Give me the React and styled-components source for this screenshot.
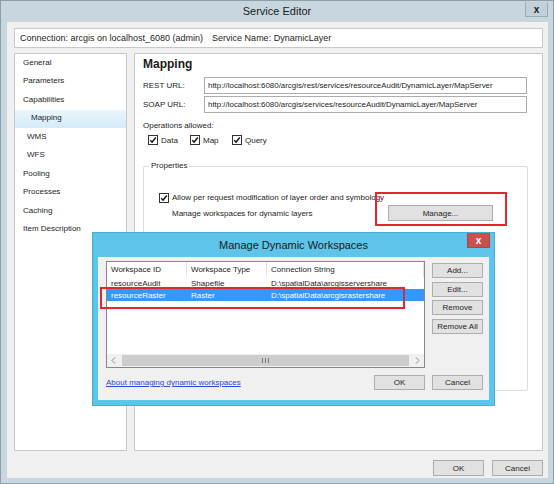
import React from "react"
import styled, { createGlobalStyle } from "styled-components"

const GlobalStyle = createGlobalStyle`
  html, body {
    margin: 0;
    padding: 0;
  }
  body {
    width: 554px;
    height: 484px;
    overflow: hidden;
    background: #c8d6e0;
    font-family: "Liberation Sans", Arial, sans-serif;
    font-size: 8px;
    color: #1e1e1e;
  }
`

const Window = styled.div`
  position: relative;
  width: 554px;
  height: 484px;
  box-sizing: border-box;
  background: #c8d6e0;
  box-shadow: inset 0 0 0 1px #8d9eab;
  display: flex;
  flex-direction: column;
`

const TitleBar = styled.div`
  height: 22px;
  display: flex;
  align-items: center;
  justify-content: center;
  font-size: 11px;
  color: #1a1a1a;
  flex: none;
`

const CloseButton = styled.div`
  position: absolute;
  top: ${(p) => p.$top}px;
  right: ${(p) => p.$right}px;
  width: ${(p) => p.$w}px;
  height: 15px;
  box-sizing: border-box;
  display: flex;
  align-items: center;
  justify-content: center;
  background: ${(p) => (p.$red ? "#c75050" : "#c3d0da")};
  border: 1px solid ${(p) => (p.$red ? "#b04545" : "#9aabb8")};
  border-top: none;
  font-size: 10px;
  font-weight: bold;
  color: ${(p) => (p.$red ? "#ffffff" : "#1a1a1a")};
`

const Body = styled.div`
  flex: 1;
  margin: 0 6px 6px 7px;
  background: #f0f0f0;
  padding: 6px 5px 0 7px;
  display: flex;
  flex-direction: column;
`

const ConnectionBar = styled.div`
  height: 20px;
  box-sizing: border-box;
  border: 1px solid #c8c8c8;
  background: #ffffff;
  display: flex;
  align-items: center;
  padding-left: 5px;
  font-size: 9px;
  gap: 9px;
`

const Columns = styled.div`
  margin-top: 5px;
  height: 398px;
  display: flex;
  gap: 7px;
`

const Nav = styled.div`
  width: 113px;
  box-sizing: border-box;
  background: #ffffff;
  border: 1px solid #c8c8c8;
  display: flex;
  flex-direction: column;
`

const NavItem = styled.div`
  height: 18.5px;
  display: flex;
  align-items: center;
  padding-left: ${(p) => p.$indent}px;
  padding-bottom: 2px;
  box-sizing: border-box;
  background: ${(p) =>
    p.$selected ? "linear-gradient(#eaf5fc, #d5ebf9)" : "transparent"};
`

const Main = styled.div`
  flex: 1;
  box-sizing: border-box;
  background: #ffffff;
  border: 1px solid #c8c8c8;
  padding: 2px 13px 0 8px;
  display: flex;
  flex-direction: column;
`

const Heading = styled.div`
  height: 16px;
  display: flex;
  align-items: center;
  font-size: 12px;
  font-weight: bold;
  color: #1a1a1a;
`

const FieldRow = styled.div`
  display: flex;
  align-items: center;
  margin-top: ${(p) => p.$mt}px;
`

const FieldLabel = styled.div`
  width: 61px;
  flex: none;
`

const TextInput = styled.div`
  width: 323px;
  height: 17px;
  box-sizing: border-box;
  border: 1px solid #abadb3;
  background: #ffffff;
  display: flex;
  align-items: center;
  padding-left: 3px;
  font-size: 7.9px;
  white-space: nowrap;
  overflow: hidden;
`

const Caption = styled.div`
  margin-top: ${(p) => p.$mt}px;
  height: 12px;
  display: flex;
  align-items: center;
`

const ChecksRow = styled.div`
  margin-top: 3px;
  height: 12px;
  padding-left: 5px;
  display: flex;
  align-items: center;
`

const CheckItem = styled.label`
  width: ${(p) => p.$w || 42}px;
  display: flex;
  align-items: center;
  gap: 3px;
  flex: none;
`

const Box = styled.span`
  width: 10px;
  height: 10px;
  box-sizing: border-box;
  border: 1px solid #333333;
  background: #ffffff;
  display: inline-flex;
  align-items: center;
  justify-content: center;
  flex: none;
`

const GroupBox = styled.div`
  position: relative;
  margin-top: 20px;
  width: 385px;
  height: 225px;
  box-sizing: border-box;
  border: 1px solid #dcdcdc;
  border-radius: 2px;
  padding: 23px 0 0 15px;
`

const GroupLegend = styled.span`
  position: absolute;
  top: -6px;
  left: 5px;
  padding: 0 2px;
  background: #ffffff;
`

const GroupRow = styled.div`
  display: flex;
  align-items: center;
  height: ${(p) => p.$h}px;
  padding-left: ${(p) => p.$pl || 0}px;
`

const RowText = styled.div`
  width: 216px;
  flex: none;
`

const Button = styled.div`
  width: ${(p) => p.$w || 51}px;
  height: ${(p) => p.$h || 15}px;
  box-sizing: border-box;
  background: #e1e1e1;
  border: 1px solid #adadad;
  display: flex;
  align-items: center;
  justify-content: center;
  flex: none;
`

const Footer = styled.div`
  margin-top: 9px;
  display: flex;
  justify-content: flex-end;
  gap: 8px;
`

const Dialog = styled.div`
  position: absolute;
  left: 93px;
  top: 233px;
  width: 401px;
  height: 172px;
  box-sizing: border-box;
  background: #5ec4ea;
  box-shadow: 0 0 0 1px #48aed6;
  display: flex;
  flex-direction: column;
`

const DialogTitle = styled.div`
  height: 24px;
  flex: none;
  display: flex;
  align-items: center;
  justify-content: center;
  font-size: 11px;
  color: #1a1a1a;
  padding-bottom: 1px;
  box-sizing: border-box;
`

const DialogBody = styled.div`
  flex: 1;
  margin: 0 5px 5px 5px;
  background: #f0f0f0;
  padding: 4px 6px 10px 8px;
  display: grid;
  grid-template-columns: 319px 51px;
  grid-template-rows: 107px 15px;
  column-gap: 7px;
  row-gap: 7px;
`

const List = styled.div`
  box-sizing: border-box;
  background: #ffffff;
  border: 1px solid #828790;
  display: flex;
  flex-direction: column;
  overflow: hidden;
`

const ListRow = styled.div`
  display: grid;
  grid-template-columns: 80px 80px 1fr;
  height: ${(p) => p.$h}px;
  align-items: center;
  background: ${(p) => (p.$selected ? "#3399ff" : "transparent")};
  color: ${(p) => (p.$selected ? "#ffffff" : "#1e1e1e")};
`

const Cell = styled.div`
  height: 100%;
  display: flex;
  align-items: center;
  padding-left: 4px;
  white-space: nowrap;
  overflow: hidden;
  border-right: ${(p) => (p.$header ? "1px solid #e5e5e5" : "none")};
`

const ListFill = styled.div`
  flex: 1;
`

const ScrollBar = styled.div`
  height: 13px;
  flex: none;
  background: #f0f0f0;
  display: flex;
  align-items: stretch;
`

const ScrollArrow = styled.div`
  width: 13px;
  display: flex;
  align-items: center;
  justify-content: center;
  flex: none;
`

const ScrollThumb = styled.div`
  flex: 1;
  margin: 1px 2px;
  background: #cdcdcd;
  display: flex;
  align-items: center;
  justify-content: center;
`

const SideButtons = styled.div`
  display: flex;
  flex-direction: column;
  gap: 3.5px;
  padding-top: 2px;
`

const BottomRow = styled.div`
  display: flex;
  align-items: center;
  justify-content: space-between;
`

const HelpLink = styled.a`
  color: #2a48d0;
  text-decoration: underline;
  cursor: pointer;
`

const Marker = styled.div`
  position: absolute;
  left: ${(p) => p.$x}px;
  top: ${(p) => p.$y}px;
  width: ${(p) => p.$w}px;
  height: ${(p) => p.$h}px;
  box-sizing: border-box;
  border: 2px solid #e2282f;
  pointer-events: none;
`

const Check = () => (
  <Box>
    <svg width="8" height="8" viewBox="0 0 8 8">
      <path d="M1.2 4.2 L3.1 6.1 L6.8 1.6" stroke="#1e1e1e" strokeWidth="1.5" fill="none" />
    </svg>
  </Box>
)

const navItems = [
  { label: "General", indent: 8 },
  { label: "Parameters", indent: 8 },
  { label: "Capabilities", indent: 8 },
  { label: "Mapping", indent: 16, selected: true },
  { label: "WMS", indent: 12 },
  { label: "WFS", indent: 12 },
  { label: "Pooling", indent: 8 },
  { label: "Processes", indent: 8 },
  { label: "Caching", indent: 8 },
  { label: "Item Description", indent: 8 },
]

const workspaces = [
  ["resourceAudit", "Shapefile", "D:\\spatialData\\arcgisservershare"],
  ["resourceRaster", "Raster", "D:\\spatialData\\arcgisrastershare", true],
]

const App = () => {
  return (
    <>
      <GlobalStyle />
      <Window>
        <TitleBar>Service Editor</TitleBar>
        <CloseButton $top={2} $right={6} $w={23}>x</CloseButton>
        <Body>
          <ConnectionBar>
            <span>Connection: arcgis on localhost_6080 (admin)</span>
            <span>Service Name: DynamicLayer</span>
          </ConnectionBar>
          <Columns>
            <Nav>
              {navItems.map((item) => (
                <NavItem key={item.label} $indent={item.indent} $selected={item.selected}>
                  {item.label}
                </NavItem>
              ))}
            </Nav>
            <Main>
              <Heading>Mapping</Heading>
              <FieldRow $mt={5}>
                <FieldLabel>REST URL:</FieldLabel>
                <TextInput>http://localhost:6080/arcgis/rest/services/resourceAudit/DynamicLayer/MapServer</TextInput>
              </FieldRow>
              <FieldRow $mt={2}>
                <FieldLabel>SOAP URL:</FieldLabel>
                <TextInput>http://localhost:6080/arcgis/services/resourceAudit/DynamicLayer/MapServer</TextInput>
              </FieldRow>
              <Caption $mt={6}>Operations allowed:</Caption>
              <ChecksRow>
                <CheckItem><Check />Data</CheckItem>
                <CheckItem><Check />Map</CheckItem>
                <CheckItem><Check />Query</CheckItem>
              </ChecksRow>
              <GroupBox>
                <GroupLegend>Properties</GroupLegend>
                <GroupRow $h={15}>
                  <CheckItem $w={300}>
                    <Check />
                    Allow per request modification of layer order and symbology
                  </CheckItem>
                </GroupRow>
                <GroupRow $h={16} $pl={13}>
                  <RowText>Manage workspaces for dynamic layers</RowText>
                  <Button $w={105} $h={16}>Manage...</Button>
                </GroupRow>
              </GroupBox>
            </Main>
          </Columns>
          <Footer>
            <Button $h={16}>OK</Button>
            <Button $h={16}>Cancel</Button>
          </Footer>
        </Body>

        <Marker $x={375} $y={192} $w={132} $h={34} />

        <Dialog>
          <DialogTitle>Manage Dynamic Workspaces</DialogTitle>
          <CloseButton $top={0} $right={4} $w={23} $red>x</CloseButton>
          <DialogBody>
            <List>
              <ListRow $h={15}>
                <Cell $header>Workspace ID</Cell>
                <Cell $header>Workspace Type</Cell>
                <Cell $header>Connection String</Cell>
              </ListRow>
              {workspaces.map(([id, type, conn, selected]) => (
                <ListRow key={id} $h={12} $selected={selected}>
                  <Cell>{id}</Cell>
                  <Cell>{type}</Cell>
                  <Cell>{conn}</Cell>
                </ListRow>
              ))}
              <ListFill />
              <ScrollBar>
                <ScrollArrow>
                  <svg width="5" height="7" viewBox="0 0 5 7">
                    <path d="M4 0.5 L1 3.5 L4 6.5" stroke="#8a8a8a" strokeWidth="1" fill="none" />
                  </svg>
                </ScrollArrow>
                <ScrollThumb>
                  <svg width="7" height="5" viewBox="0 0 7 5">
                    <path d="M0.5 0 V5 M3.5 0 V5 M6.5 0 V5" stroke="#7a7a7a" strokeWidth="1" />
                  </svg>
                </ScrollThumb>
                <ScrollArrow>
                  <svg width="5" height="7" viewBox="0 0 5 7">
                    <path d="M1 0.5 L4 3.5 L1 6.5" stroke="#8a8a8a" strokeWidth="1" fill="none" />
                  </svg>
                </ScrollArrow>
              </ScrollBar>
            </List>
            <SideButtons>
              <Button>Add...</Button>
              <Button>Edit...</Button>
              <Button>Remove</Button>
              <Button>Remove All</Button>
            </SideButtons>
            <BottomRow>
              <HelpLink>About managing dynamic workspaces</HelpLink>
              <Button>OK</Button>
            </BottomRow>
            <Button>Cancel</Button>
          </DialogBody>
        </Dialog>

        <Marker $x={100} $y={287} $w={305} $h={22} />
      </Window>
    </>
  )
}

export default App
